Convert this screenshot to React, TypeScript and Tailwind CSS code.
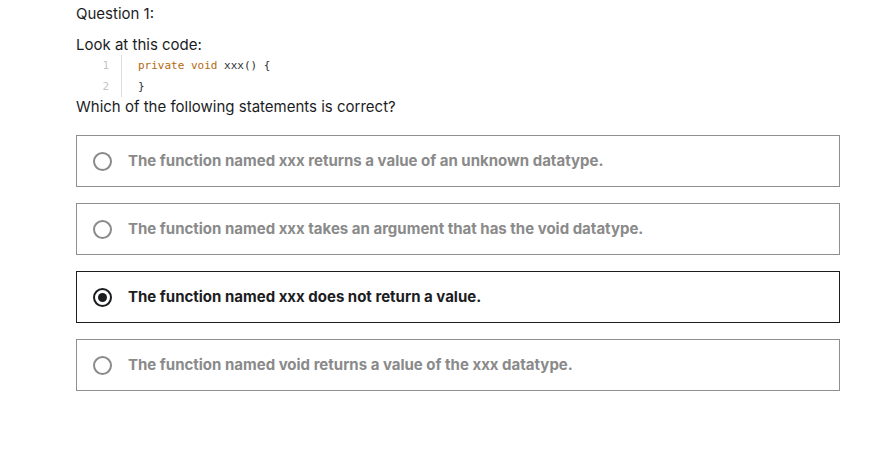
import React from "react";

const options = [
  "The function named xxx returns a value of an unknown datatype.",
  "The function named xxx takes an argument that has the void datatype.",
  "The function named xxx does not return a value.",
  "The function named void returns a value of the xxx datatype.",
];

const selected = 2;

export default function App() {
  return (
    <div className="w-[890px] h-[452px] bg-white text-[#1c1d1f] font-['Inter',sans-serif] pl-[76px] pr-[50px] pt-[4px]">
      <div className="text-[15px] leading-[20px]">Question 1:</div>

      <div className="mt-[11px] text-[15px] leading-[20px]">Look at this code:</div>

      <div className="font-['DejaVu_Sans_Mono',monospace] text-[11px] leading-[21px] mt-[0px]">
        <div className="flex">
          <span className="w-[46px] text-right pr-[12px] text-[#c4c4c4] border-r border-[#dcdcdc] mr-[16px]">1</span>
          <span>
            <span className="text-[#b4690e]">private void </span>
            <span className="text-[#2d2f31]">xxx() {"{"}</span>
          </span>
        </div>
        <div className="flex">
          <span className="w-[46px] text-right pr-[12px] text-[#c4c4c4] border-r border-[#dcdcdc] mr-[16px]">2</span>
          <span className="text-[#2d2f31]">{"}"}</span>
        </div>
      </div>

      <div className="text-[15px] leading-[20px] mt-[0px]">Which of the following statements is correct?</div>

      <div className="mt-[18px] flex flex-col gap-[16px] w-[764px]">
        {options.map((o, i) => {
          const on = i === selected;
          return (
            <div
              key={i}
              className={
                "h-[52px] flex items-center pl-[16px] border " +
                (on ? "border-[#1c1d1f]" : "border-[#8f8f8f]")
              }
            >
              <span
                className={
                  "w-[19px] h-[19px] rounded-full border-2 flex items-center justify-center " +
                  (on ? "border-[#1c1d1f]" : "border-[#8a8a8a]")
                }
              >
                {on && <span className="w-[9px] h-[9px] rounded-full bg-[#1c1d1f]" />}
              </span>
              <span
                className={
                  "ml-[16px] text-[15px] font-bold " +
                  (on ? "text-[#1c1d1f]" : "text-[#8a8a8a]")
                }
              >
                {o}
              </span>
            </div>
          );
        })}
      </div>
    </div>
  );
}
